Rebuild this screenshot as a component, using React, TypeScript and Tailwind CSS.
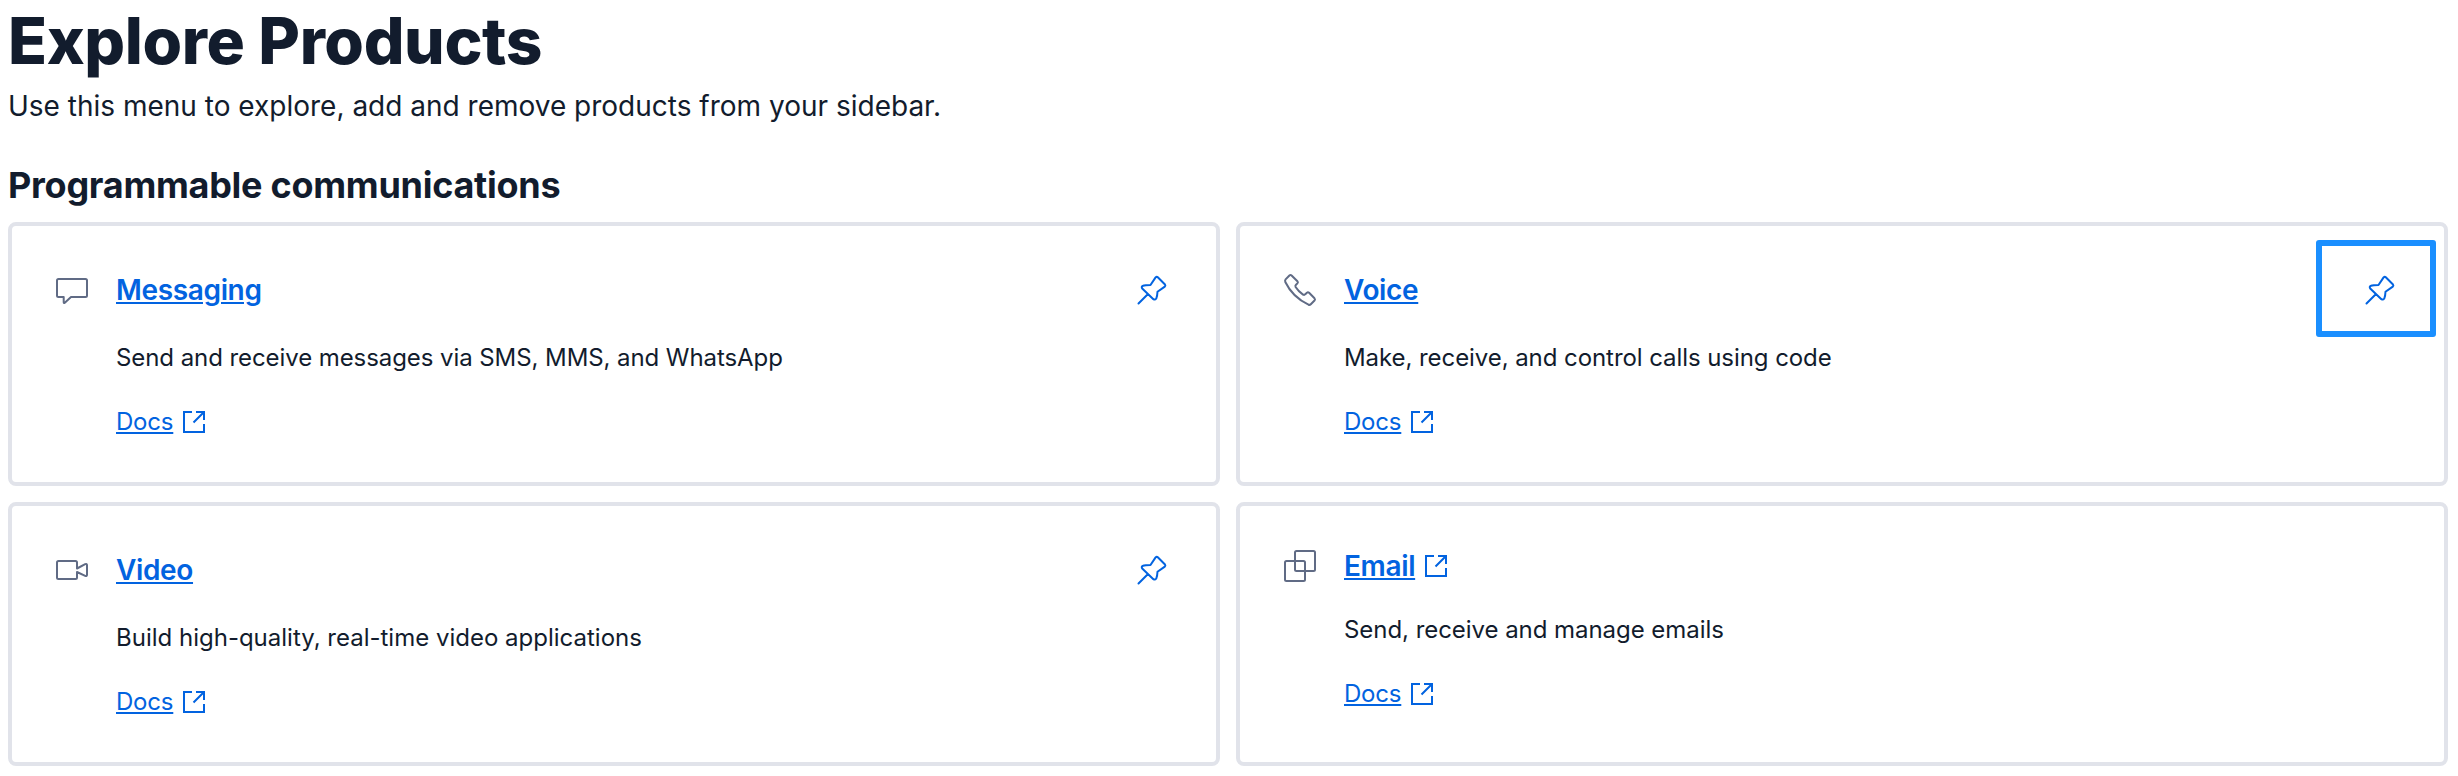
import type { ReactNode } from "react";

function LineIcon({ children, className }: { children: ReactNode; className: string }) {
  return (
    <svg
      viewBox="0 0 40 40"
      fill="none"
      stroke="currentColor"
      strokeWidth="2"
      strokeLinejoin="round"
      strokeLinecap="round"
      className={className}
    >
      {children}
    </svg>
  );
}

const MessageIcon = () => (
  <path d="M6.500 9H33.500Q35 9 35 10.500V25.500Q35 27 33.500 27H19L12.800 32.700Q11.700 33.500 11.700 32.300V27H6.500Q5 27 5 25.500V10.500Q5 9 6.500 9Z" />
);

const PhoneIcon = () => (
  <path d="M5.6 9.4L9.4 5.5Q10.5 4.5 11.6 5.5L17.4 11.3Q18.4 12.3 17.4 13.4L16 14.8Q15 15.8 15.6 17Q18.5 21.5 23 24.6Q24.4 25.3 25.3 24.2L26.9 22.7Q28 21.8 29.1 22.8L34.5 28.3Q35.5 29.4 34.5 30.5L30.8 34.2Q29.8 35.2 28.5 34.7Q12.5 27 5.3 12Q4.7 10.5 5.6 9.4Z" />
);

const VideoIcon = () => (
  <path d="M25 18.500L33.200 14.200Q35 13.400 35 15.200V24.800Q35 26.600 33.200 25.800L25 22V27.500Q25 29 23.500 29H6.500Q5 29 5 27.500V12.500Q5 11 6.500 11H23.500Q25 11 25 12.500V18.500" />
);

const SquaresIcon = () => (
  <>
    <rect x="15" y="5" width="20" height="20" rx="1.5" />
    <rect x="5" y="15" width="20" height="20" rx="1.5" />
  </>
);

const PinIcon = () => (
  <LineIcon className="size-10 text-[#0263e0]">
    <path d="M6.5 33.5L16 24M10.200 18.500Q9 16.500 11 15.800Q13 15 18.500 15L23.600 7.400Q24.700 6.300 25.800 7.300L33 14.500Q33.800 15.600 32.800 16.600L25.500 21.800Q25.300 26 24.300 28.500Q23 30.200 21.400 29.200Z" />
  </LineIcon>
);

const ExternalIcon = () => (
  <svg viewBox="0 0 32 32" fill="none" stroke="currentColor" strokeWidth="2" className="size-8 shrink-0">
    <path d="M14 6H6V26H26V18M18 6H26V14M25.500 6.500L15.500 16.500" />
  </svg>
);

type Product = {
  name: string;
  text: string;
  textClass: string;
  icon: ReactNode;
  pinned?: boolean;
  highlighted?: boolean;
};

const products: Product[] = [
  {
    name: "Messaging",
    text: "Send and receive messages via SMS, MMS, and WhatsApp",
    textClass: "tracking-[-0.075px]",
    icon: <MessageIcon />,
    pinned: true,
  },
  {
    name: "Voice",
    text: "Make, receive, and control calls using code",
    textClass: "tracking-[-0.07px]",
    icon: <PhoneIcon />,
    pinned: true,
    highlighted: true,
  },
  {
    name: "Video",
    text: "Build high-quality, real-time video applications",
    textClass: "tracking-normal",
    icon: <VideoIcon />,
    pinned: true,
  },
  {
    name: "Email",
    text: "Send, receive and manage emails",
    textClass: "tracking-[-0.05px]",
    icon: <SquaresIcon />,
  },
];

function Card({ name, text, textClass, icon, pinned, highlighted }: Product) {
  return (
    <article className="relative h-[264px] rounded-lg border-4 border-[#e1e3ea] p-10">
      <div className={pinned ? "flex h-12 items-center" : "flex h-10 items-center"}>
        <LineIcon className="mr-6 size-10 text-[#606b85]">{icon}</LineIcon>
        <h3 className={pinned ? "text-[28px] leading-10" : "w-[76px] text-[28px] leading-10"}>
          <a
            href="#"
            className="font-semibold tracking-[-0.35px] text-[#0263e0] underline decoration-2 underline-offset-2"
          >
            {name}
          </a>
        </h3>
        {pinned ? (
          <button className="ml-auto flex size-12 items-center justify-center">
            <PinIcon />
          </button>
        ) : (
          <span className="text-[#0263e0]">
            <ExternalIcon />
          </span>
        )}
      </div>
      <p className={"mt-6 ml-16 text-[24px] leading-10 " + textClass}>{text}</p>
      <div className="mt-6 ml-16 flex h-10 items-center text-[24px] leading-10 text-[#0263e0]">
        <span className="w-[62px]">
          <a href="#" className="tracking-[-0.2px] underline decoration-2 underline-offset-2">
            Docs
          </a>
        </span>
        <ExternalIcon />
      </div>
      {highlighted && (
        <div className="absolute top-[14px] right-[8px] h-[97px] w-[120px] rounded-[3px] border-[6px] border-[#1a8fff]" />
      )}
    </article>
  );
}

export default function App() {
  return (
    <main className="h-[776px] w-[2458px] overflow-hidden bg-white pr-[10px] pl-2 font-['Inter',sans-serif] text-[#121c2d]">
      <h1 className="text-[64px] leading-[82px] font-extrabold tracking-[-0.36px]">Explore Products</h1>
      <p className="mt-1 text-[28px] leading-10">
        Use this menu to explore, add and remove products from your sidebar.
      </p>
      <h2 className="mt-[35px] mb-[13px] text-[36px] leading-[48px] font-bold tracking-[-0.27px]">
        Programmable communications
      </h2>
      <section className="grid grid-cols-2 gap-4">
        {products.map((p) => (
          <Card key={p.name} {...p} />
        ))}
      </section>
    </main>
  );
}
